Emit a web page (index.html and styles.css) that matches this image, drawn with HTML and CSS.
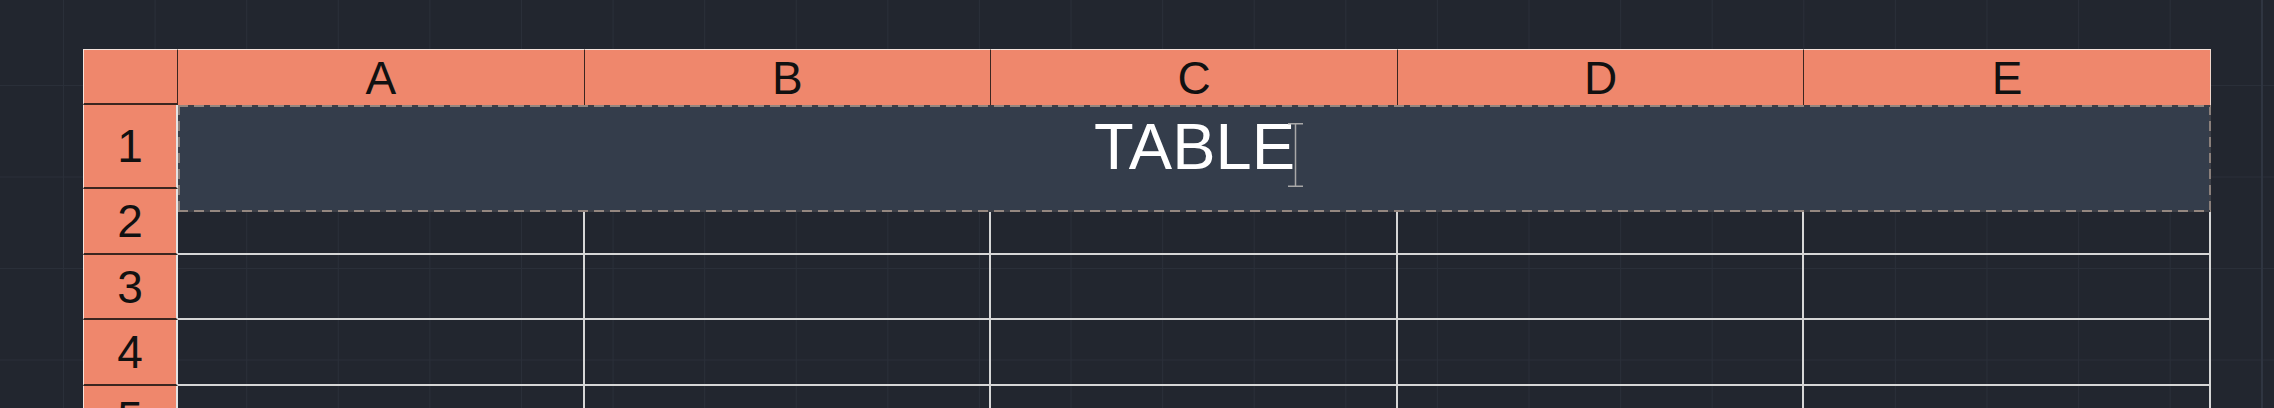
FILE: index.html
```html
<!DOCTYPE html>
<html lang="en">
<head>
<meta charset="utf-8">
<title>Table</title>
<link rel="stylesheet" href="styles.css">
</head>
<body>
<div class="canvas">
  <div class="sheet">
    <div class="corner"></div>
    <div class="colhead">A</div>
    <div class="colhead">B</div>
    <div class="colhead">C</div>
    <div class="colhead">D</div>
    <div class="colhead last">E</div>

    <div class="rowhead">1</div>
    <div class="cell"></div><div class="cell"></div><div class="cell"></div><div class="cell"></div><div class="cell"></div>

    <div class="rowhead">2</div>
    <div class="cell"></div><div class="cell"></div><div class="cell"></div><div class="cell"></div><div class="cell"></div>

    <div class="rowhead">3</div>
    <div class="cell"></div><div class="cell"></div><div class="cell"></div><div class="cell"></div><div class="cell"></div>

    <div class="rowhead">4</div>
    <div class="cell"></div><div class="cell"></div><div class="cell"></div><div class="cell"></div><div class="cell"></div>

    <div class="rowhead">5</div>
    <div class="cell"></div><div class="cell"></div><div class="cell"></div><div class="cell"></div><div class="cell"></div>

    <div class="editor">
      <span class="editor-text">TABLE<span class="caret"><svg width="15" height="64" viewBox="0 0 15 64"><path d="M0 0.75H15M7.5 0V64M0 63.25H15" fill="none" stroke="#a8a8a8" stroke-width="1.5"/></svg></span></span>
    </div>
  </div>
</div>
</body>
</html>
```
FILE: styles.css
```css
html, body {
  margin: 0;
  padding: 0;
  height: 408px;
  overflow: hidden;
  background: #22262f;
}

.canvas {
  height: 408px;
  padding: 49px 0 0 83px;
  box-sizing: border-box;
  background-color: #22262f;
  background-image:
    linear-gradient(90deg, transparent 2261px, #2f3541 2261px, #2f3541 2263px, transparent 2263px),
    linear-gradient(90deg, #2a2f39 1px, transparent 1px),
    linear-gradient(180deg, #2a2f39 1px, transparent 1px);
  background-size: 100% 100%, 91.6px 91.5px, 91.6px 91.5px;
  background-position: 0 0, 63px 85px, 63px 85px;
  background-repeat: no-repeat, repeat, repeat;
  font-family: "Liberation Sans", Arial, sans-serif;
}

.sheet {
  position: relative;
  width: 2128px;
  display: grid;
  grid-template-columns: 95px repeat(5, 1fr);
  grid-template-rows: 56px 84px 66px 65px 66px 66px;
}

.corner,
.colhead,
.rowhead,
.cell {
  box-sizing: border-box;
}

.corner {
  background: #ef876c;
  border-top: 1px solid #f3e2dc;
  border-left: 1px solid #f3e2dc;
  border-right: 1px solid #3b2620;
  border-bottom: 2px solid #3b2620;
}

.colhead {
  background: #ef876c;
  border-top: 1px solid #f3e2dc;
  border-right: 1px solid #3b2620;
  display: flex;
  align-items: center;
  justify-content: center;
  font-size: 46px;
  color: #111;
  line-height: 1;
}

.colhead.last {
  border-right: 1px solid #f0d6cc;
}

.rowhead {
  background: #ef876c;
  border-left: 1px solid #f3e2dc;
  border-right: 2px solid #e4e4e4;
  border-bottom: 2px solid #3b2620;
  display: flex;
  align-items: center;
  justify-content: center;
  font-size: 46px;
  color: #111;
  line-height: 1;
}

.cell {
  border-right: 2px solid #d6d6d6;
  border-bottom: 2px solid #d6d6d6;
}

.editor {
  position: absolute;
  left: 95px;
  top: 56px;
  width: 2033px;
  height: 107px;
  box-sizing: border-box;
  display: flex;
  justify-content: center;
  align-items: flex-start;
  background:
    repeating-linear-gradient(90deg, #948780 0, #948780 10px, #3c3f47 10px, #3c3f47 16px) left top / 100% 2px no-repeat,
    repeating-linear-gradient(90deg, #948780 0, #948780 10px, #3c3f47 10px, #3c3f47 16px) left bottom / 100% 2px no-repeat,
    repeating-linear-gradient(180deg, #8a7f7a 0, #8a7f7a 10px, #3c3f47 10px, #3c3f47 16px) left top / 2px 100% no-repeat,
    repeating-linear-gradient(180deg, #8a7f7a 0, #8a7f7a 10px, #3c3f47 10px, #3c3f47 16px) right top / 2px 100% no-repeat,
    #343d4b;
}

.editor-text {
  position: relative;
  font-size: 65px;
  line-height: 84px;
  color: #ffffff;
}

.caret {
  position: absolute;
  left: calc(100% - 7px);
  top: 18px;
  width: 15px;
  height: 64px;
  line-height: 0;
}
```
